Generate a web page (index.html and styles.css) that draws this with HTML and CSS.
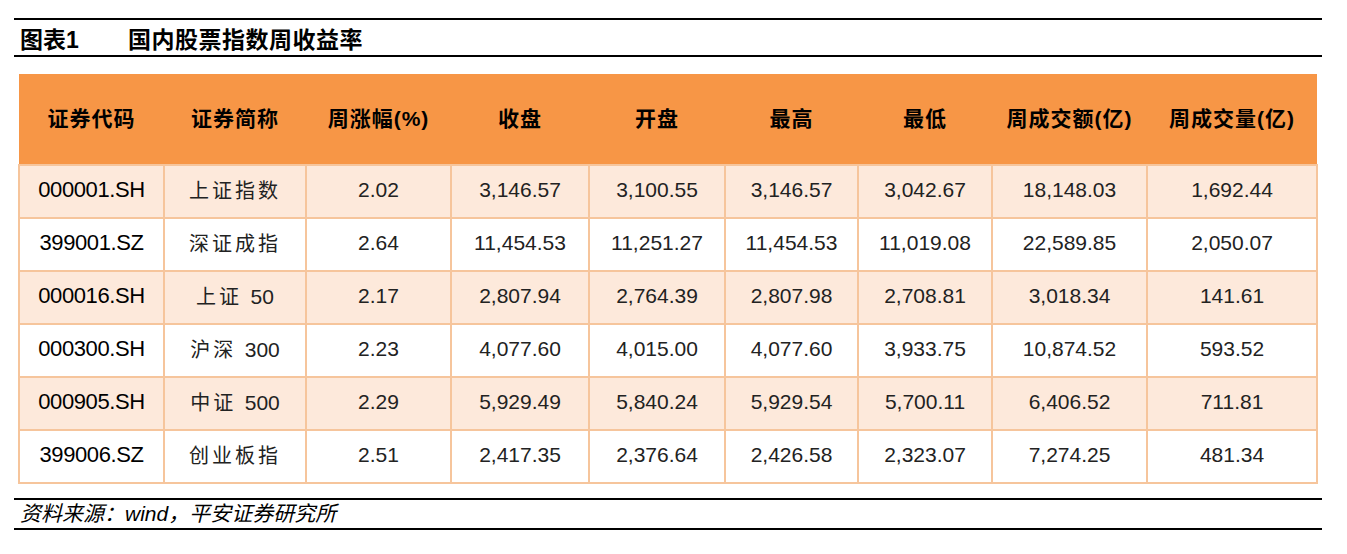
FILE: index.html
```html
<!DOCTYPE html>
<html lang="zh">
<head>
<meta charset="utf-8">
<link rel="stylesheet" href="styles.css">
</head>
<body>
<div class="page">
  <div class="title-bar">
    <span class="fig-no">图表1</span>
    <span class="fig-title">国内股票指数周收益率</span>
  </div>
  <div class="table-wrap">
    <table class="data">
      <colgroup>
        <col class="c1"><col class="c2"><col class="c3"><col class="c4"><col class="c5"><col class="c6"><col class="c7"><col class="c8"><col class="c9">
      </colgroup>
      <thead>
        <tr>
          <th>证券代码</th><th>证券简称</th><th>周涨幅(%)</th><th>收盘</th><th>开盘</th><th>最高</th><th>最低</th><th>周成交额(亿)</th><th>周成交量(亿)</th>
        </tr>
      </thead>
      <tbody>
        <tr class="odd"><td class="code">000001.SH</td><td class="cn">上证指数</td><td>2.02</td><td>3,146.57</td><td>3,100.55</td><td>3,146.57</td><td>3,042.67</td><td>18,148.03</td><td>1,692.44</td></tr>
        <tr><td class="code">399001.SZ</td><td class="cn">深证成指</td><td>2.64</td><td>11,454.53</td><td>11,251.27</td><td>11,454.53</td><td>11,019.08</td><td>22,589.85</td><td>2,050.07</td></tr>
        <tr class="odd"><td class="code">000016.SH</td><td class="cn">上证 <span class="num">50</span></td><td>2.17</td><td>2,807.94</td><td>2,764.39</td><td>2,807.98</td><td>2,708.81</td><td>3,018.34</td><td>141.61</td></tr>
        <tr><td class="code">000300.SH</td><td class="cn">沪深 <span class="num">300</span></td><td>2.23</td><td>4,077.60</td><td>4,015.00</td><td>4,077.60</td><td>3,933.75</td><td>10,874.52</td><td>593.52</td></tr>
        <tr class="odd"><td class="code">000905.SH</td><td class="cn">中证 <span class="num">500</span></td><td>2.29</td><td>5,929.49</td><td>5,840.24</td><td>5,929.54</td><td>5,700.11</td><td>6,406.52</td><td>711.81</td></tr>
        <tr><td class="code">399006.SZ</td><td class="cn">创业板指</td><td>2.51</td><td>2,417.35</td><td>2,376.64</td><td>2,426.58</td><td>2,323.07</td><td>7,274.25</td><td>481.34</td></tr>
      </tbody>
    </table>
  </div>
  <div class="source">资料来源：wind，平安证券研究所</div>
</div>
</body>
</html>
```

FILE: styles.css
```css
html, body {
  margin: 0;
  padding: 0;
  background: #ffffff;
}

.page {
  margin-left: 14px;
  width: 1308px;
  padding-top: 18px;
  font-family: "Liberation Sans", Arial, "Noto Sans CJK SC", sans-serif;
  color: #1a1a1a;
}

.title-bar {
  border-top: 2px solid #000;
  border-bottom: 2px solid #000;
  height: 35px;
  display: flex;
  align-items: center;
  padding-left: 6px;
  box-sizing: content-box;
}

.fig-no,
.fig-title {
  font-family: "Liberation Sans", "Noto Sans CJK SC", sans-serif;
  font-weight: bold;
  font-size: 23px;
  color: #000;
}

.fig-no {
  width: 108px;
}

.fig-title {
  letter-spacing: 0.5px;
}

.table-wrap {
  padding-top: 17px;
  padding-left: 4px;
}

.data {
  border-collapse: collapse;
  table-layout: fixed;
  width: 1298px;
}

.c1 { width: 145px; }
.c2 { width: 142px; }
.c3 { width: 145px; }
.c4 { width: 138px; }
.c5 { width: 136px; }
.c6 { width: 133px; }
.c7 { width: 134px; }
.c8 { width: 155px; }
.c9 { width: 170px; }

.data th {
  background: #f79646;
  height: 86px;
  padding: 0 0 4px 0;
  font-family: "Liberation Sans", "Noto Sans CJK SC", sans-serif;
  font-weight: bold;
  font-size: 21px;
  letter-spacing: 1px;
  color: #000;
  text-align: center;
  border: none;
}

.data td {
  height: 47px;
  padding: 0 0 4px 0;
  border: 2px solid #f6c59c;
  text-align: center;
  font-size: 21px;
  color: #222;
  font-family: "Liberation Sans", Arial, "Noto Sans CJK SC", sans-serif;
}

.data thead tr th {
  border-bottom: 2px solid #f6c59c;
}

.data tr.odd td {
  background: #fde9db;
}

.data td.code {
  color: #000;
  font-size: 22px;
  letter-spacing: -0.4px;
}

.data td.cn {
  font-size: 20px;
  letter-spacing: 3px;
}

.data td.cn .num {
  letter-spacing: 0;
  font-size: 21px;
}

.source {
  margin-top: 14px;
  border-top: 2px solid #000;
  border-bottom: 2px solid #000;
  height: 28px;
  line-height: 28px;
  padding-left: 6px;
  font-style: italic;
  font-size: 21px;
  color: #000;
  font-family: "Liberation Sans", "Noto Sans CJK SC", sans-serif;
}
```
